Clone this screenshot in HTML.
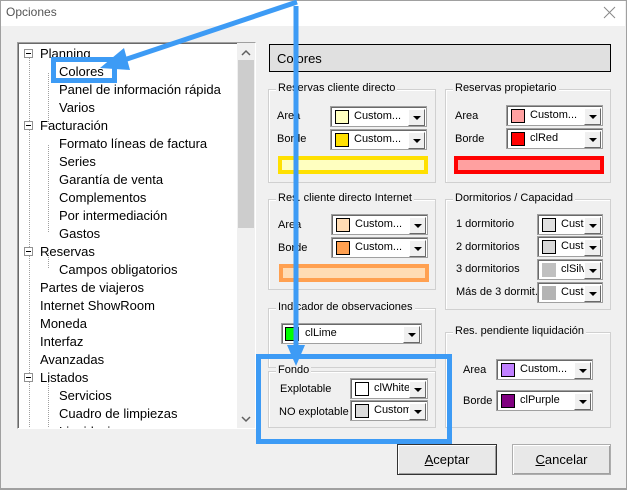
<!DOCTYPE html>
<html><head><meta charset="utf-8"><style>
*{box-sizing:border-box;margin:0;padding:0}
body{width:627px;height:490px;overflow:hidden;background:#f0f0f0;font-family:"Liberation Sans",sans-serif;font-size:12px;color:#000;position:relative}
.a{position:absolute}
.win{left:0;top:0;width:627px;height:490px;border:1px solid #a0a0a0;border-bottom:2px solid #a0a0a0}
.title{left:1px;top:1px;width:624px;height:25px;background:#fff}
.tree{left:17px;top:42px;width:239px;height:387px;background:#fff;border:1px solid #a0a0a0;border-right-color:#fff;border-bottom-color:#fff;box-shadow:inset 1px 1px 0 #696969;overflow:hidden}
.ti{position:absolute;font-size:13px;white-space:nowrap;line-height:16px}
.box{position:absolute;width:9px;height:9px;border:1px solid #919191;background:#fff}
.box:after{content:"";position:absolute;left:1px;top:3px;width:5px;height:1px;background:#000}
.vd{position:absolute;width:1px;border-left:1px dotted #a0a0a0}
.sb{left:237px;top:43px;width:18px;height:385px;background:#f0f0f0}
.grp{position:absolute;border:1px solid #d0d0d0;box-shadow:1px 1px 0 #fff inset}
.grp>.l{position:absolute;top:-8px;left:7px;background:#f0f0f0;padding:0 2px;font-size:11px;white-space:nowrap}
.lab{position:absolute;font-size:11px;white-space:nowrap}
.cb{position:absolute;height:21px;background:#fff;border:1px solid #a0a0a0;box-shadow:inset 1px 1px 0 #696969}
.cb .sw{position:absolute;left:4px;top:3px;width:14px;height:14px;border:1px solid #000}
.cb .t{position:absolute;left:23px;top:3px;font-size:11px;white-space:nowrap;overflow:hidden}
.cb .bt{position:absolute;right:1px;top:2px;width:17px;height:17px;background:#f0f0f0;border:1px solid #fff;border-right-color:#696969;border-bottom-color:#696969}
.cb .bt:after{content:"";position:absolute;left:4px;top:6px;border-left:4px solid transparent;border-right:4px solid transparent;border-top:4px solid #000}
.bar{position:absolute;height:18px;border:4px solid}
.btn{position:absolute;height:31px;border:1px solid #707070;background:#e8e8e8;box-shadow:inset 1px 1px 0 #fff,inset -1px -1px 0 #a0a0a0;font-size:13px;text-align:center;line-height:29px}
</style></head><body>
<div class="a win"></div>
<div class="a title"></div>
<div class="a" style="left:6px;top:5px;font-size:12px;color:#555">Opciones</div>
<svg class="a" style="left:603px;top:6px" width="14" height="14"><path d="M1 1L12 12M12 1L1 12" stroke="#888" stroke-width="1"/></svg>

<div class="a tree">
<div class="vd" style="left:11px;top:12px;height:380px"></div>
<div class="vd" style="left:30px;top:30px;height:51px"></div>
<div class="vd" style="left:30px;top:102px;height:87px"></div>
<div class="vd" style="left:30px;top:210px;height:15px"></div>
<div class="vd" style="left:30px;top:336px;height:60px"></div>
<div class="box" style="left:6px;top:6px"></div>
<div class="box" style="left:6px;top:78px"></div>
<div class="box" style="left:6px;top:204px"></div>
<div class="box" style="left:6px;top:330px"></div>
<div class="ti" style="left:22px;top:3px">Planning</div>
<div class="ti" style="left:41px;top:21px">Colores</div>
<div class="ti" style="left:41px;top:39px">Panel de información rápida</div>
<div class="ti" style="left:41px;top:57px">Varios</div>
<div class="ti" style="left:22px;top:75px">Facturación</div>
<div class="ti" style="left:41px;top:93px">Formato líneas de factura</div>
<div class="ti" style="left:41px;top:111px">Series</div>
<div class="ti" style="left:41px;top:129px">Garantía de venta</div>
<div class="ti" style="left:41px;top:147px">Complementos</div>
<div class="ti" style="left:41px;top:165px">Por intermediación</div>
<div class="ti" style="left:41px;top:183px">Gastos</div>
<div class="ti" style="left:22px;top:201px">Reservas</div>
<div class="ti" style="left:41px;top:219px">Campos obligatorios</div>
<div class="ti" style="left:22px;top:237px">Partes de viajeros</div>
<div class="ti" style="left:22px;top:255px">Internet ShowRoom</div>
<div class="ti" style="left:22px;top:273px">Moneda</div>
<div class="ti" style="left:22px;top:291px">Interfaz</div>
<div class="ti" style="left:22px;top:309px">Avanzadas</div>
<div class="ti" style="left:22px;top:327px">Listados</div>
<div class="ti" style="left:41px;top:345px">Servicios</div>
<div class="ti" style="left:41px;top:363px">Cuadro de limpiezas</div>
<div class="ti" style="left:41px;top:381px">Liquidaciones</div>
</div>
<div class="a sb"></div>
<div class="a" style="left:238px;top:60px;width:16px;height:168px;background:#cdcdcd"></div>
<svg class="a" style="left:240px;top:48px" width="12" height="10"><path d="M2 7L6 3L10 7" stroke="#606060" stroke-width="1.5" fill="none"/></svg>
<svg class="a" style="left:240px;top:414px" width="12" height="10"><path d="M2 3L6 7L10 3" stroke="#606060" stroke-width="1.5" fill="none"/></svg>

<div class="a" style="left:269px;top:44px;width:342px;height:28px;background:#e0e0e0;border:1px solid #000;font-size:13px;padding:6px 0 0 7px">Colores</div>

<div class="grp" style="left:268px;top:89px;width:168px;height:94px"><span class="l">Reservas cliente directo</span></div>
<div class="lab" style="left:277px;top:110px">Area</div>
<div class="lab" style="left:277px;top:133px">Borde</div>
<div class="cb" style="left:330px;top:106px;width:97px"><div class="sw" style="background:#ffffc0"></div><div class="t">Custom...</div><div class="bt"></div></div>
<div class="cb" style="left:330px;top:129px;width:97px"><div class="sw" style="background:#ffe000"></div><div class="t">Custom...</div><div class="bt"></div></div>
<div class="bar" style="left:278px;top:156px;width:150px;border-color:#ffe000;background:#ffffc0"></div>

<div class="grp" style="left:445px;top:89px;width:166px;height:94px"><span class="l">Reservas propietario</span></div>
<div class="lab" style="left:455px;top:110px">Area</div>
<div class="lab" style="left:455px;top:133px">Borde</div>
<div class="cb" style="left:506px;top:105px;width:97px"><div class="sw" style="background:#ffa0a0"></div><div class="t">Custom...</div><div class="bt"></div></div>
<div class="cb" style="left:506px;top:128px;width:97px"><div class="sw" style="background:#ff0000"></div><div class="t">clRed</div><div class="bt"></div></div>
<div class="bar" style="left:454px;top:156px;width:150px;border-color:#ff0000;background:#ffa0a0"></div>

<div class="grp" style="left:268px;top:199px;width:168px;height:91px"><span class="l">Res. cliente directo Internet</span></div>
<div class="lab" style="left:278px;top:219px">Area</div>
<div class="lab" style="left:278px;top:242px">Borde</div>
<div class="cb" style="left:331px;top:214px;width:97px"><div class="sw" style="background:#ffdcb4"></div><div class="t">Custom...</div><div class="bt"></div></div>
<div class="cb" style="left:331px;top:237px;width:97px"><div class="sw" style="background:#ffa050"></div><div class="t">Custom...</div><div class="bt"></div></div>
<div class="bar" style="left:279px;top:264px;width:150px;border-color:#ffa050;background:#ffdcb4"></div>

<div class="grp" style="left:445px;top:199px;width:166px;height:111px"><span class="l">Dormitorios / Capacidad</span></div>
<div class="lab" style="left:456px;top:218px">1 dormitorio</div>
<div class="lab" style="left:456px;top:241px">2 dormitorios</div>
<div class="lab" style="left:456px;top:263px">3 dormitorios</div>
<div class="lab" style="left:456px;top:286px">Más de 3 dormit.</div>
<div class="cb" style="left:537px;top:214px;width:66px"><div class="sw" style="background:#e0e0e0"></div><div class="t" style="width:24px">Custom</div><div class="bt"></div></div>
<div class="cb" style="left:537px;top:236px;width:66px"><div class="sw" style="background:#d8d8d8"></div><div class="t" style="width:24px">Custom</div><div class="bt"></div></div>
<div class="cb" style="left:537px;top:259px;width:66px"><div class="sw" style="background:#c0c0c0;border-color:#c0c0c0"></div><div class="t" style="width:24px">clSilver</div><div class="bt"></div></div>
<div class="cb" style="left:537px;top:282px;width:66px"><div class="sw" style="background:#b4b4b4;border-color:#b4b4b4"></div><div class="t" style="width:24px">Custom</div><div class="bt"></div></div>

<div class="grp" style="left:268px;top:308px;width:168px;height:60px"><span class="l">Indicador de observaciones</span></div>
<div class="cb" style="left:281px;top:323px;width:141px"><div class="sw" style="background:#00ff00;left:3px"></div><div class="t">clLime</div><div class="bt"></div></div>

<div class="grp" style="left:445px;top:332px;width:166px;height:96px"><span class="l">Res. pendiente liquidación</span></div>
<div class="lab" style="left:463px;top:364px">Area</div>
<div class="lab" style="left:463px;top:395px">Borde</div>
<div class="cb" style="left:496px;top:359px;width:97px"><div class="sw" style="background:#c080ff"></div><div class="t">Custom...</div><div class="bt"></div></div>
<div class="cb" style="left:496px;top:390px;width:97px"><div class="sw" style="background:#800080"></div><div class="t">clPurple</div><div class="bt"></div></div>

<div class="grp" style="left:268px;top:371px;width:168px;height:57px"><span class="l">Fondo</span></div>
<div class="lab" style="left:280px;top:383px">Explotable</div>
<div class="lab" style="left:279px;top:406px">NO explotable</div>
<div class="cb" style="left:350px;top:378px;width:78px"><div class="sw" style="background:#fff"></div><div class="t" style="width:36px">clWhite</div><div class="bt"></div></div>
<div class="cb" style="left:350px;top:400px;width:78px"><div class="sw" style="background:#dcdcdc"></div><div class="t" style="width:36px">Custom</div><div class="bt"></div></div>

<div class="btn" style="left:397px;top:444px;width:100px;border-color:#333"><u>A</u>ceptar</div>
<div class="btn" style="left:512px;top:444px;width:99px;border-color:#adadad"><u>C</u>ancelar</div>

<svg class="a" style="left:0;top:0" width="627" height="490">
<g stroke="#3d9bf5" fill="none" stroke-width="5">
<rect x="53.5" y="59.5" width="61" height="21"/>
<rect x="258.5" y="356.5" width="191" height="85"/>
<line x1="297" y1="2" x2="118" y2="62"/>
<line x1="296" y1="6" x2="296" y2="350"/>
</g>
<polygon points="100,68 124,48 130,70" fill="#3d9bf5"/>
<polygon points="287,345 305,345 296,366" fill="#3d9bf5"/>
</svg>
</body></html>
